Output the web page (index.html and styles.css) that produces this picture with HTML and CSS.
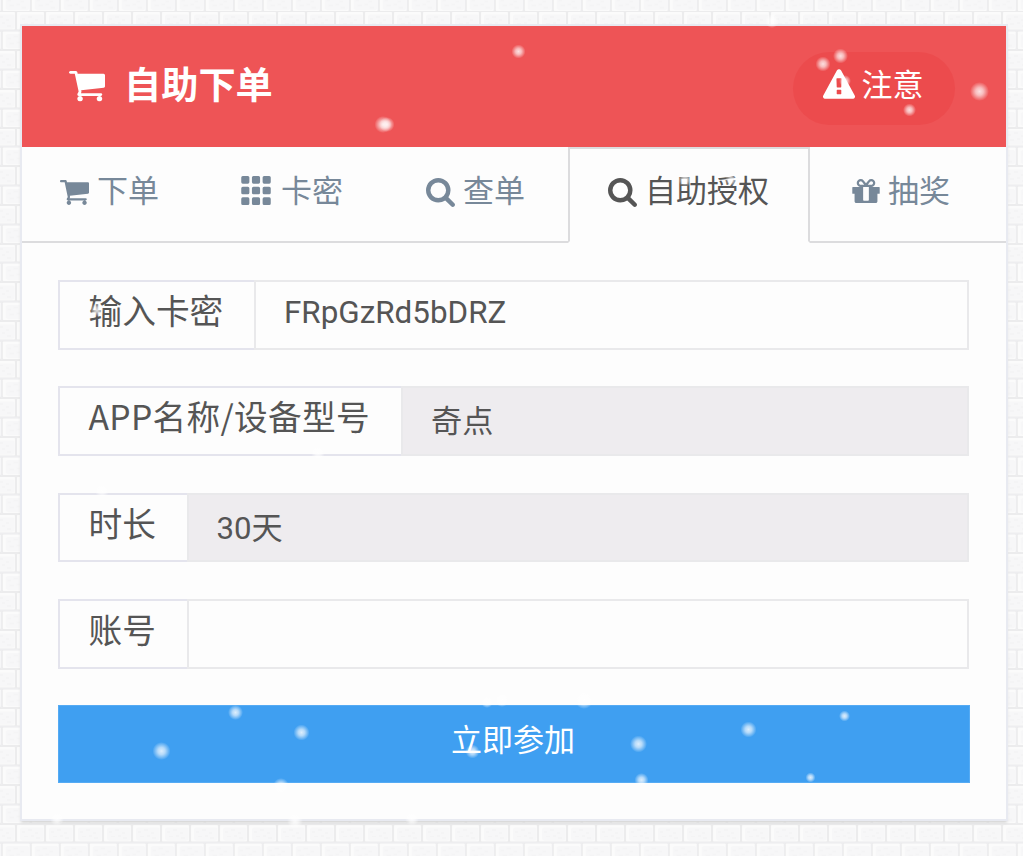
FILE: index.html
```html
<!DOCTYPE html>
<html lang="zh-CN">
<head>
<meta charset="utf-8">
<title>自助下单</title>
<link rel="stylesheet" href="styles.css">
</head>
<body>
<svg class="defs" width="0" height="0">
  <symbol id="cart" viewBox="0 256 1664 1408" preserveAspectRatio="none"><path d="M640 1536q0 52-38 90t-90 38-90-38-38-90 38-90 90-38 90 38 38 90zm896 0q0 52-38 90t-90 38-90-38-38-90 38-90 90-38 90 38 38 90zm128-1088v512q0 24-16.500 42.500t-40.500 21.500l-1044 122q13 60 13 70 0 16-24 64h920q26 0 45 19t19 45-19 45-45 19h-1024q-26 0-45-19t-19-45q0-11 8-31.500t16-36 21.500-40 15.500-29.500l-177-823h-204q-26 0-45-19t-19-45 19-45 45-19h256q16 0 28.500 6.500t19.500 15.500 13 24.500 8 26 5.500 29.500 4.500 26h1201q26 0 45 19t19 45z"/></symbol>
  <symbol id="search" viewBox="0 128 1664 1664"><path d="M1152 832q0-185-131.500-316.500t-316.500-131.500-316.500 131.500-131.500 316.500 131.500 316.500 316.500 131.500 316.500-131.500 131.500-316.500zm512 832q0 52-38 90t-90 38q-54 0-90-38l-343-342q-179 124-399 124-143 0-273.500-55.500t-225-150-150-225-55.500-273.500 55.500-273.500 150-225 225-150 273.500-55.500 273.500 55.500 225 150 150 225 55.500 273.500q0 220-124 399l343 343q37 37 37 90z"/></symbol>
  <symbol id="grid" viewBox="0 0 29 28.500"><path d="M1.500 0h5q1.500 0 1.500 1.500v4.500q0 1.500-1.500 1.500h-5q-1.500 0-1.500-1.500v-4.500q0-1.500 1.500-1.500zm10.500 0h5q1.500 0 1.500 1.500v4.500q0 1.500-1.500 1.500h-5q-1.500 0-1.500-1.500v-4.500q0-1.500 1.500-1.500zm10.500 0h5q1.500 0 1.500 1.500v4.500q0 1.500-1.500 1.500h-5q-1.500 0-1.500-1.500v-4.500q0-1.500 1.500-1.500zM1.500 10.500h5q1.500 0 1.500 1.500v4.500q0 1.500-1.500 1.500h-5q-1.500 0-1.500-1.500v-4.500q0-1.500 1.500-1.500zm10.500 0h5q1.500 0 1.500 1.500v4.500q0 1.500-1.500 1.500h-5q-1.500 0-1.500-1.500v-4.500q0-1.500 1.500-1.500zm10.500 0h5q1.500 0 1.500 1.500v4.500q0 1.500-1.500 1.500h-5q-1.500 0-1.500-1.500v-4.500q0-1.500 1.500-1.500zM1.500 21h5q1.500 0 1.500 1.500v4.500q0 1.500-1.500 1.500h-5q-1.500 0-1.500-1.500v-4.500q0-1.500 1.500-1.500zm10.500 0h5q1.500 0 1.500 1.500v4.500q0 1.500-1.500 1.500h-5q-1.500 0-1.500-1.500v-4.500q0-1.500 1.500-1.500zm10.500 0h5q1.500 0 1.500 1.500v4.500q0 1.500-1.500 1.500h-5q-1.500 0-1.500-1.500v-4.500q0-1.500 1.500-1.500z"/></symbol>
  <symbol id="gift" viewBox="0 192 1536 1344"><path d="M928 1356v-716h-320v716q0 25 18 38.500t46 13.500h192q28 0 46-13.500t18-38.500zm-456-844h195l-126-161q-26-31-69-31-40 0-68 28t-28 68 28 68 68 28zm688-96q0-40-28-68t-68-28q-43 0-69 31l-125 161h194q40 0 68-28t28-68zm376 256v320q0 14-9 23t-23 9h-96v416q0 40-28 68t-68 28h-1088q-40 0-68-28t-28-68v-416h-96q-14 0-23-9t-9-23v-320q0-14 9-23t23-9h440q-93 0-158.500-65.500t-65.500-158.500 65.500-158.500 158.500-65.500q107 0 168 77l128 165 128-165q61-77 168-77 93 0 158.500 65.500t65.500 158.500-65.500 158.500-158.500 65.500h440q14 0 23 9t9 23z"/></symbol>
  <symbol id="warning" viewBox="0 0 1792 1664"><path d="M1024 1375v-190q0-14-9.500-23.500t-22.500-9.500h-192q-13 0-22.500 9.500t-9.500 23.500v190q0 14 9.500 23.500t22.500 9.500h192q13 0 22.500-9.500t9.500-23.500zm-2-374l18-459q0-12-10-19-13-11-24-11h-220q-11 0-24 11-10 7-10 21l17 457q0 10 10 16.500t24 6.500h185q14 0 23.500-6.500t10.500-16.500zm-14-934l768 1408q35 63-2 126-17 29-46.500 46t-63.500 17h-1536q-34 0-63.500-17t-46.500-46q-37-63-2-126l768-1408q17-31 47-49t65-18 65 18 47 49z"/></symbol>
</svg>

<main class="card">
  <header class="card-header">
    <h1 class="title"><svg class="icon-title"><use href="#cart"/></svg><span>自助下单</span></h1>
    <button class="notice"><svg class="icon-warning"><use href="#warning"/></svg><span>注意</span></button>
  </header>
  <nav class="tabs">
    <a class="tab"><svg class="icon-cart"><use href="#cart"/></svg><span>下单</span></a>
    <a class="tab"><svg class="icon-grid"><use href="#grid"/></svg><span>卡密</span></a>
    <a class="tab"><svg class="icon-search"><use href="#search"/></svg><span>查单</span></a>
    <a class="tab active"><svg class="icon-search"><use href="#search"/></svg><span>自助授权</span></a>
    <a class="tab"><svg class="icon-gift"><use href="#gift"/></svg><span>抽奖</span></a>
  </nav>
  <form class="form">
    <div class="field"><label class="addon addon-key">输入卡密</label><div class="value">FRpGzRd5bDRZ</div></div>
    <div class="field"><label class="addon addon-app">APP名称/设备型号</label><div class="value readonly">奇点</div></div>
    <div class="field"><label class="addon addon-short">时长</label><div class="value readonly">30天</div></div>
    <div class="field"><label class="addon addon-short">账号</label><div class="value"></div></div>
    <button class="submit" type="button">立即参加</button>
  </form>
</main>

<svg class="snow" viewBox="0 0 1023 856">
  <defs>
    <radialGradient id="flake"><stop offset="0" stop-color="#fff" stop-opacity=".82"/><stop offset=".4" stop-color="#fff" stop-opacity=".62"/><stop offset="1" stop-color="#fff" stop-opacity="0"/></radialGradient>
  </defs>
  <g fill="url(#flake)">
    <circle cx="518.500" cy="51.500" r="7"/><circle cx="383" cy="124.500" r="8.500"/><circle cx="387" cy="124.500" r="7.500"/>
    <circle cx="823" cy="64" r="7.500"/><circle cx="840.500" cy="56" r="7.500"/><circle cx="845" cy="81" r="6"/><circle cx="909.500" cy="110" r="6.500"/><circle cx="979.500" cy="91.500" r="9.500"/>
    <circle cx="772" cy="21" r="7"/><circle cx="685" cy="180" r="7"/><circle cx="731" cy="180" r="6"/><circle cx="97" cy="310" r="7"/>
    <circle cx="318" cy="453" r="7"/><circle cx="102" cy="491" r="7"/>
    <circle cx="235.500" cy="712.500" r="7.500"/><circle cx="301.500" cy="732.500" r="8"/><circle cx="161.500" cy="751" r="9"/><circle cx="472.500" cy="751.500" r="7"/>
    <circle cx="638.500" cy="744" r="8.500"/><circle cx="641.500" cy="780" r="7"/><circle cx="748.500" cy="729.500" r="8"/><circle cx="844.500" cy="716" r="5.500"/><circle cx="810.500" cy="777.500" r="5"/>
    <circle cx="281" cy="786" r="8"/><circle cx="487" cy="702" r="6"/><circle cx="502" cy="700" r="7"/><circle cx="584" cy="700" r="9"/><circle cx="57" cy="819" r="7"/><circle cx="295" cy="821" r="8"/><circle cx="412" cy="819" r="7"/>
  </g>
</svg>
</body>
</html>
```
FILE: styles.css
```css
* { box-sizing: border-box; }

body {
  margin: 0;
  height: 856px;
  overflow: hidden;
  padding: 26px 17px 0 22px;
  font-family: Roboto, "Noto Sans CJK SC", sans-serif;
  color: #555;
  background-color: #f5f5f6;
  background-image: url("data:image/svg+xml,%3Csvg xmlns='http://www.w3.org/2000/svg' width='29.010' height='38.680' viewBox='0 0 29.010 38.680'%3E%3Cdefs%3E%3Cg id='b'%3E%3Crect width='29.010' height='19.340' fill='%23ececed'/%3E%3Crect x='1' y='1' width='27' height='17.300' rx='.8' fill='%23fbfbfb'/%3E%3Crect x='4' y='3.500' width='23.500' height='14' rx='3' fill='%23f7f7f8'/%3E%3Cpath d='M6 8h3M12 6h4M19 9h3M8 13h4M15 12h3M20 15h4' stroke='%23f4f4f5' stroke-width='1.500'/%3E%3C/g%3E%3C/defs%3E%3Cuse href='%23b' x='-13'/%3E%3Cuse href='%23b' x='16.010'/%3E%3Cuse href='%23b' x='1.800' y='19.340'/%3E%3Cuse href='%23b' x='-27.210' y='19.340'/%3E%3C/svg%3E");
  background-size: 29.010px 38.680px;
  background-position: 0 11.500px;
}

.defs { position: absolute; }

svg { display: block; flex: none; fill: currentColor; }

button { border: 0; font-family: inherit; }

.card {
  width: 984px;
  height: 793px;
  background: #fdfdfd;
  box-shadow: 0 0 0 2px #e8eaf1, 0 2px 1px #c9c9c9, 0 3px 3px 1px #d9d9d9;
}

.card-header {
  display: flex;
  justify-content: space-between;
  height: 121px;
  padding: 26px 51px 0 47px;
  background: #ee5456;
  color: #fff;
}

.title {
  display: flex;
  gap: 19px;
  margin: 0;
  font-size: 37.200px;
  line-height: 68px;
  font-weight: 700;
}

.icon-title { width: 36px; height: 30.500px; margin-top: 19px; }

.notice {
  display: flex;
  gap: 7px;
  width: 162px;
  height: 73px;
  padding: 0 0 0 29.500px;
  border-radius: 37px;
  background: #ec4b4d;
  color: #fff;
  font-size: 31px;
  line-height: 68px;
}

.icon-warning { width: 32px; height: 30px; margin-top: 17px; }

.tabs {
  display: grid;
  grid-template-columns: 181px 184px 181px 242px 1fr;
  height: 96px;
  color: #778899;
}

.tab {
  display: flex;
  gap: 8px;
  padding-left: 38px;
  border-bottom: 2px solid #dcdcde;
  font-size: 31px;
  line-height: 89px;
  white-space: nowrap;
}

.tab.active {
  border: 2px solid #dcdcde;
  border-bottom-color: transparent;
  color: #555;
  line-height: 85px;
}

.tab:nth-child(3) { padding-left: 39px; }

.active .icon-search { margin-top: 29px; }

.tab:last-child { padding-left: 42px; }

.icon-cart { width: 29px; height: 25px; margin-top: 33px; }
.icon-grid { width: 30px; height: 29px; margin: 29px 2px 0 0; }
.icon-search { width: 29px; height: 29px; margin-top: 31px; }
.icon-gift { width: 28px; height: 24px; margin-top: 32px; }

.form { padding: 37px 37px 0 36px; }

.field {
  display: flex;
  height: 69.500px;
  margin-bottom: 36.900px;
}

.addon {
  flex: none;
  padding-left: 28.500px;
  border: 2px solid #e4e4ed;
  border-right: 0;
  font-family: "Noto Sans CJK SC", sans-serif;
  font-size: 33.700px;
  line-height: 55px;
  white-space: nowrap;
}

.addon-key { width: 196px; }
.addon-app { width: 343px; letter-spacing: .3px; }
.addon-short { width: 128.500px; }

.value {
  flex: 1;
  padding-left: 28px;
  border: 2px solid #e9e9eb;
  font-size: 31.400px;
  line-height: 62px;
}

.readonly {
  background: #eeecef;
  font-size: 31.200px;
  line-height: 67px;
}

.submit {
  display: block;
  width: 912px;
  height: 78px;
  margin-top: -1px;
  padding: 0 2px 7px 0;
  border: 1px solid #55abf4;
  background: #3f9ff1;
  color: #fff;
  font-size: 31px;
  line-height: 69px;
}

/* Falling snow drawn over the whole page */
.snow {
  position: absolute;
  inset: 0;
  width: 1023px;
  height: 856px;
  pointer-events: none;
}
```
